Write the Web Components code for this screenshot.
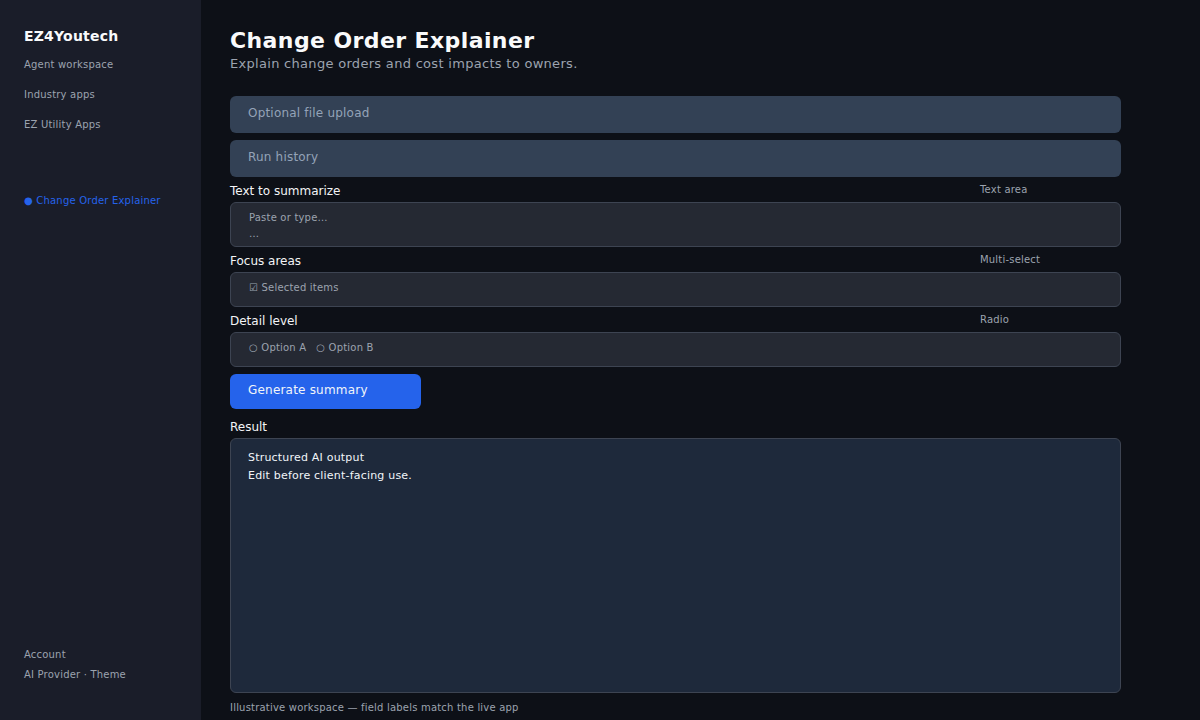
<!DOCTYPE html>
<html>
<head>
<meta charset="utf-8">
<title>Change Order Explainer</title>
<style>
html, body { margin: 0; height: 100%; background: #0d1017; }
body { font-family: "DejaVu Sans", sans-serif; }
</style>
</head>
<body>
<app-shell>
  <side-bar slot="side"></side-bar>
  <work-area></work-area>
</app-shell>

<script>
class AppShell extends HTMLElement{
    constructor(){
        super();
        this.attachShadow({mode:'open'});
        this.shadowRoot.innerHTML = `
        <style>
        :host { display: flex; width: 1200px; height: 720px; overflow: hidden; background: #0d1017; }
        </style>
        <slot name="side"></slot>
        <slot></slot>
        `
    }
}

class SideBar extends HTMLElement{
    constructor(){
        super();
        this.attachShadow({mode:'open'});
        this.shadowRoot.innerHTML = `
        <style>
        :host {
            display: flex; flex-direction: column; box-sizing: border-box;
            width: 201px; height: 720px; flex: none; padding: 26px 0 0 24px;
            background: #1a1d29; color: #9ca3af; font-size: 10px;
        }
        .brand { color: #f9fafb; font-size: 14px; font-weight: 700; line-height: 20px; margin-bottom: 13px; letter-spacing: .2px; }
        .link { line-height: 12px; margin-bottom: 18px; letter-spacing: .2px; }
        .active { color: #2563eb; margin-top: 46px; }
        .spacer { flex: 1; }
        .foot { line-height: 12px; margin-bottom: 8px; letter-spacing: .2px; }
        .foot:last-child { margin-bottom: 39px; }
        </style>
        <div class="brand">EZ4Youtech</div>
        <div class="link">Agent workspace</div>
        <div class="link">Industry apps</div>
        <div class="link">EZ Utility Apps</div>
        <div class="link active">● Change Order Explainer</div>
        <div class="spacer"></div>
        <div class="foot">Account</div>
        <div class="foot">AI Provider · Theme</div>
        `
    }
}

class PanelBar extends HTMLElement{
    constructor(){
        super();
        this.attachShadow({mode:'open'});
        this.shadowRoot.innerHTML = `
        <style>
        :host {
            display: block; box-sizing: border-box; height: 37px; padding: 0 18px;
            background: #334155; border-radius: 6px; color: #94a3b8;
            font-size: 12px; line-height: 35px; letter-spacing: .2px;
        }
        </style>
        <slot></slot>
        `
    }
}

class FieldBlock extends HTMLElement{
    static get observedAttributes(){ return ['label','kind'] }
    constructor(){
        super();
        this.attachShadow({mode:'open'});
        this.render()
    }
    attributeChangedCallback(){
        this.render()
    }
    render(){
        this.shadowRoot.innerHTML = `
        <style>
        :host { display: block; }
        .head { display: flex; justify-content: space-between; height: 25px; align-items: flex-end; padding-bottom: 0; box-sizing: border-box; }
        .label { color: #f3f4f6; font-size: 12px; line-height: 15px; margin-bottom: 3px; }
        .kind { width: 141px; color: #9ca3af; font-size: 10px; line-height: 12px; margin-bottom: 6px; letter-spacing: .2px; }
        .box {
            box-sizing: border-box; padding: 7px 18px 0; border: 1px solid #3d4452; border-radius: 6px;
            background: #252933; color: #9ca3af; font-size: 10px; line-height: 16px; letter-spacing: .2px;
        }
        </style>
        <div class="head">
            <div class="label">${this.getAttribute('label') || ''}</div>
            <div class="kind">${this.getAttribute('kind') || ''}</div>
        </div>
        <div class="box" style="height:${this.getAttribute('box') || 35}px"><slot></slot></div>
        `
    }
}

class RunButton extends HTMLElement{
    constructor(){
        super();
        this.attachShadow({mode:'open'});
        this.shadowRoot.innerHTML = `
        <style>
        :host {
            display: block; box-sizing: border-box; width: 191px; height: 35px; padding: 0 18px;
            background: #2563eb; border-radius: 6px; color: #f1f5f9;
            font-size: 12px; line-height: 32px; letter-spacing: .2px;
        }
        </style>
        <slot></slot>
        `
    }
}

class ResultBlock extends HTMLElement{
    constructor(){
        super();
        this.attachShadow({mode:'open'});
        this.shadowRoot.innerHTML = `
        <style>
        :host { display: block; }
        .label { color: #f3f4f6; font-size: 12px; line-height: 15px; margin-bottom: 3px; }
        .box {
            box-sizing: border-box; height: 255px; padding: 10px 17px 0;
            border: 1px solid #3d4452; border-radius: 6px; background: #1e293b;
            color: #f1f5f9; font-size: 11px; line-height: 18px; letter-spacing: .2px;
        }
        </style>
        <div class="label">Result</div>
        <div class="box"><slot></slot></div>
        `
    }
}

class WorkArea extends HTMLElement{
    constructor(){
        super();
        this.attachShadow({mode:'open'});
        this.shadowRoot.innerHTML = `
        <style>
        :host { display: block; box-sizing: border-box; flex: none; width: 999px; height: 720px; padding: 28px 0 0 29px; }
        .wrap { width: 891px; }
        h1 { margin: 0; color: #f9fafb; font-size: 22px; line-height: 26px; font-weight: 700; letter-spacing: .4px; }
        .sub { color: #9ca3af; font-size: 13px; line-height: 20px; margin-bottom: 22px; letter-spacing: .3px; }
        panel-bar + panel-bar { margin-top: 7px; }
        field-block + field-block { margin-top: 0; }
        run-button { margin-top: 7px; }
        result-block { margin-top: 11px; }
        .note { color: #9ca3af; font-size: 10px; line-height: 12px; margin-top: 9px; letter-spacing: .2px; }
        .gap { display: inline-block; width: 10px; }
        </style>
        <div class="wrap">
            <h1>Change Order Explainer</h1>
            <div class="sub">Explain change orders and cost impacts to owners.</div>
            <panel-bar>Optional file upload</panel-bar>
            <panel-bar>Run history</panel-bar>
            <field-block label="Text to summarize" kind="Text area" box="45">Paste or type…<br>…</field-block>
            <field-block label="Focus areas" kind="Multi-select">☑ Selected items</field-block>
            <field-block label="Detail level" kind="Radio">○ Option A<span class="gap"></span>○ Option B</field-block>
            <run-button>Generate summary</run-button>
            <result-block>Structured AI output<br>Edit before client-facing use.</result-block>
            <div class="note">Illustrative workspace — field labels match the live app</div>
        </div>
        `
    }
}

customElements.define('app-shell', AppShell);
customElements.define('side-bar', SideBar);
customElements.define('panel-bar', PanelBar);
customElements.define('field-block', FieldBlock);
customElements.define('run-button', RunButton);
customElements.define('result-block', ResultBlock);
customElements.define('work-area', WorkArea);
</script>
</body>
</html>
